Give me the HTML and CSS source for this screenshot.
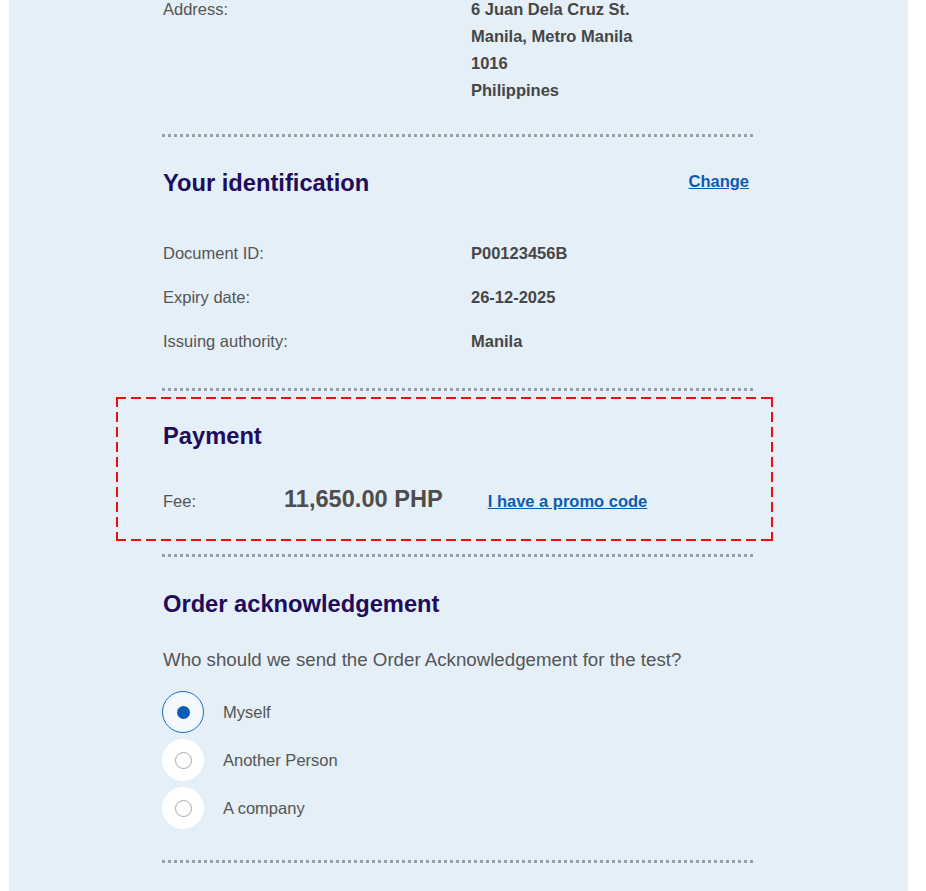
FILE: index.html
```html
<!DOCTYPE html>
<html lang="en">
<head>
  <meta charset="UTF-8">
  <meta name="viewport" content="width=device-width, initial-scale=1.0">
  <title>Order summary</title>
  <link rel="stylesheet" href="styles.css">
</head>
<body>
  <div class="panel">
    <div class="content">

      <div class="address-block">
        <div class="info-row address-row">
          <span class="info-label">Address:</span>
          <div class="info-value">
            <div>6 Juan Dela Cruz St.</div>
            <div>Manila, Metro Manila</div>
            <div>1016</div>
            <div>Philippines</div>
          </div>
        </div>
      </div>

      <div class="separator sep-address"></div>

      <div class="section">
        <div class="section-header">
          <h2>Your identification</h2>
          <a class="link change-link">Change</a>
        </div>
        <div class="info-list">
          <div class="info-row">
            <span class="info-label">Document ID:</span>
            <span class="info-value">P00123456B</span>
          </div>
          <div class="info-row">
            <span class="info-label">Expiry date:</span>
            <span class="info-value">26-12-2025</span>
          </div>
          <div class="info-row">
            <span class="info-label">Issuing authority:</span>
            <span class="info-value">Manila</span>
          </div>
        </div>
      </div>

      <div class="separator sep-ident"></div>

      <div class="section highlight">
        <h2>Payment</h2>
        <div class="fee-row">
          <span class="fee-label">Fee:</span>
          <span class="fee-amount">11,650.00 PHP</span>
          <a class="link promo-link">I have a promo code</a>
        </div>
      </div>

      <div class="separator sep-payment"></div>

      <div class="section order-section">
        <h2>Order acknowledgement</h2>
        <p class="question">Who should we send the Order Acknowledgement for the test?</p>
        <div class="radio-list">
          <label class="radio-option">
            <span class="radio-circle checked"><span class="radio-dot"></span></span>
            Myself
          </label>
          <label class="radio-option">
            <span class="radio-circle"><span class="radio-dot"></span></span>
            Another Person
          </label>
          <label class="radio-option">
            <span class="radio-circle"><span class="radio-dot"></span></span>
            A company
          </label>
        </div>
      </div>

      <div class="separator sep-order"></div>

    </div>
  </div>
</body>
</html>
```

FILE: styles.css
```css
* {
  margin: 0;
  padding: 0;
  box-sizing: border-box;
  font-family: 'Liberation Sans', Arial, Helvetica, sans-serif;
}

body {
  background-color: #ffffff;
  overflow: hidden;
}

.panel {
  width: 899px;
  margin-left: 9px;
  min-height: 891px;
  background-color: #e4eff8;
  padding-bottom: 40px;
}

.content {
  width: 746px;
  padding-left: 153px;
}

/* address (top is scrolled nearly out of view) */
.address-block {
  margin-top: -4px;
}

.info-row {
  display: grid;
  grid-template-columns: 309px 1fr;
  align-items: center;
  height: 44px;
  font-size: 16.5px;
}

.address-row {
  height: auto;
  align-items: start;
  line-height: 27px;
}

.info-label {
  color: #555555;
  padding-left: 1px;
}

.info-value {
  color: #464646;
  font-weight: bold;
}

.separator {
  width: 593px;
  height: 3px;
  background-image: repeating-linear-gradient(to right, #98a1ab 0 3px, transparent 3px 6px);
}

.sep-address {
  margin-top: 30px;
}

.sep-ident {
  margin-top: 25px;
}

.sep-payment {
  margin-top: 13px;
}

.sep-order {
  margin-top: 28px;
}

.section h2 {
  font-size: 23.7px;
  line-height: 28px;
  font-weight: bold;
  color: #200c5a;
  padding-left: 1px;
}

.section-header {
  display: flex;
  justify-content: space-between;
  align-items: center;
  padding-right: 6px;
  margin-top: 32px;
}

.link {
  color: #0b5cb2;
  font-weight: bold;
  font-size: 16.5px;
  text-decoration: underline;
  cursor: pointer;
}

.change-link {
  margin-top: -4px;
}

.info-list {
  margin-top: 34px;
}

/* payment box with the red dashed outline */
.highlight {
  margin: 6px -18px 0 -46px;
  padding: 25px 18px 21px 46px;
  background:
    repeating-linear-gradient(to right, #f20d0d 0 10px, transparent 10px 15px) top / 100% 2px no-repeat,
    repeating-linear-gradient(to right, #f20d0d 0 10px, transparent 10px 15px) bottom / 100% 2px no-repeat,
    repeating-linear-gradient(to bottom, #f20d0d 0 10px, transparent 10px 15px) left / 2px 100% no-repeat,
    repeating-linear-gradient(to bottom, #f20d0d 0 10px, transparent 10px 15px) right / 2px 100% no-repeat;
}

.fee-row {
  display: flex;
  align-items: baseline;
  height: 44px;
  padding-top: 10px;
  margin-top: 26px;
}

.fee-label {
  width: 122px;
  font-size: 16.5px;
  color: #555555;
  padding-left: 1px;
}

.fee-amount {
  font-size: 23.6px;
  font-weight: bold;
  color: #4d4d4d;
}

.promo-link {
  margin-left: 45px;
}

.order-section {
  margin-top: 33px;
}

.question {
  margin-top: 29px;
  font-size: 18.7px;
  line-height: 26px;
  color: #555555;
  padding-left: 1px;
}

.radio-list {
  margin-top: 15px;
}

.radio-option {
  display: flex;
  align-items: center;
  height: 48px;
  font-size: 16.5px;
  color: #555555;
  cursor: pointer;
}

.radio-circle {
  width: 42px;
  height: 42px;
  border-radius: 50%;
  background-color: #ffffff;
  display: flex;
  align-items: center;
  justify-content: center;
  margin-right: 19px;
}

.radio-dot {
  width: 17px;
  height: 17px;
  border-radius: 50%;
  border: 1px solid #a9a9a9;
  background-color: #ffffff;
}

.radio-circle.checked {
  background-color: #f3f8fd;
  border: 1.5px solid #1f6cc4;
}

.radio-circle.checked .radio-dot {
  width: 13px;
  height: 13px;
  border: none;
  background-color: #0a5cb8;
}
```
